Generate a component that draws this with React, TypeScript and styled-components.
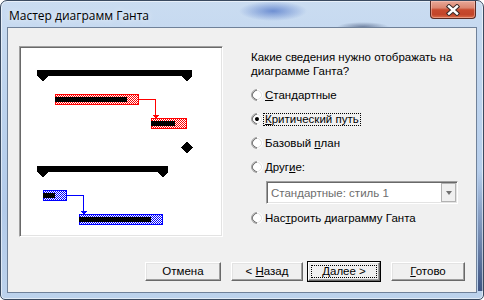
import React from 'react';
import styled, { createGlobalStyle, css } from 'styled-components';

const Global = createGlobalStyle`
  html, body { margin: 0; padding: 0; background: #ffffff; }
  body { width: 484px; height: 300px; overflow: hidden; }
`;

const UI_FONT = `'Liberation Sans', Arial, sans-serif`;

const Window = styled.div`
  width: 484px;
  height: 300px;
  box-sizing: border-box;
  display: flex;
  flex-direction: column;
  border: 1px solid #3a4a60;
  border-radius: 7px 7px 5px 5px;
  overflow: hidden;
  background:
    radial-gradient(ellipse 34px 10px at 272px 10px, rgba(80, 118, 200, 0.75), rgba(80, 118, 200, 0) 100%),
    radial-gradient(ellipse 26px 5px at 362px 26px, rgba(40, 58, 96, 0.55), rgba(40, 58, 96, 0) 100%),
    linear-gradient(180deg, rgba(40, 62, 112, 0) 0%, rgba(40, 62, 112, 0.85) 100%) 477px 170px / 6px 120px no-repeat,
    linear-gradient(180deg, #cadcf1 0%, #bed4ee 30%, #b3cbea 70%, #bcd2ec 100%);
  box-shadow: inset 0 0 0 1px rgba(255, 255, 255, 0.55);
  font-family: ${UI_FONT};
`;

const TitleBar = styled.div`
  height: 26px;
  flex: none;
  display: flex;
  align-items: flex-start;
  justify-content: space-between;
`;

const Title = styled.div`
  padding: 7px 0 0 8px;
  font-family: 'Open Sans', 'Noto Sans', sans-serif;
  font-size: 12px;
  line-height: 15px;
  color: #000;
  text-shadow: 0 0 6px rgba(255, 255, 255, 0.9);
`;

const CloseButton = styled.div`
  width: 46px;
  height: 18px;
  margin-right: 7px;
  box-sizing: border-box;
  border: 1px solid #5a2b24;
  border-top: none;
  border-radius: 0 0 4px 4px;
  background: linear-gradient(180deg, #e8a898 0%, #dc8670 40%, #c84a2e 52%, #c2452a 80%, #dc6e4a 100%);
  box-shadow: inset 0 0 0 1px rgba(255, 210, 200, 0.45);
  display: flex;
  align-items: center;
  justify-content: center;
`;

const Client = styled.div`
  flex: 1;
  margin: 0 6px 6px 6px;
  border: 1px solid #6f8199;
  background: #f0f0f0;
  display: flex;
  flex-direction: column;
  justify-content: space-between;
  font-size: 11.5px;
  color: #000;
`;

const MainRow = styled.div`
  display: flex;
  padding: 18px 0 0 11px;
`;

const Preview = styled.div`
  width: 204px;
  height: 191px;
  box-sizing: border-box;
  padding: 1px;
  border: 1px solid;
  border-color: #a0a0a0 #ffffff #ffffff #a0a0a0;
  box-shadow: inset 1px 1px #696969, inset -1px -1px #e3e3e3;
  background: #ffffff;
  svg { display: block; }
`;

const Options = styled.div`
  margin-left: 28px;
  padding-top: 4px;
  display: flex;
  flex-direction: column;
`;

const Question = styled.div`
  line-height: 14px;
  margin-bottom: 5px;
`;

const RadioRow = styled.div`
  height: 24px;
  display: flex;
  align-items: center;
`;

const RadioOuter = styled.span`
  width: 12px;
  height: 12px;
  box-sizing: border-box;
  border-radius: 50%;
  border: 1px solid;
  border-color: #a0a0a0 #ffffff #ffffff #a0a0a0;
  transform: rotate(-45deg);
  flex: none;
  margin-right: 2px;
  display: flex;
`;

const RadioInner = styled.span<{ $on?: boolean }>`
  flex: 1;
  border-radius: 50%;
  border: 1px solid;
  border-color: #696969 #e3e3e3 #e3e3e3 #696969;
  background: #ffffff;
  display: flex;
  align-items: center;
  justify-content: center;
  &::after {
    content: '';
    width: 4px;
    height: 4px;
    border-radius: 50%;
    background: ${(p) => (p.$on ? '#000' : 'transparent')};
  }
`;

const Label = styled.span<{ $focus?: boolean }>`
  padding: 0 1px;
  line-height: 11px;
  border: 1px dotted transparent;
  margin-left: -2px;
  ${(p) =>
    p.$focus &&
    css`
      border-color: #000;
    `}
`;

const Key = styled.span`
  text-decoration: underline;
  text-underline-offset: 1px;
`;

const Combo = styled.div`
  margin: 2px 0 2px 15px;
  width: 192px;
  height: 23px;
  box-sizing: border-box;
  border: 1px solid;
  border-color: #a0a0a0 #ffffff #ffffff #a0a0a0;
  box-shadow: inset 1px 1px #696969, inset -1px -1px #e3e3e3;
  background: #ffffff;
  display: flex;
  align-items: center;
  justify-content: space-between;
  padding: 0 1px 0 4px;
`;

const ComboText = styled.span`
  color: #6d6d6d;
`;

const ComboArrow = styled.span`
  width: 15px;
  height: 19px;
  box-sizing: border-box;
  border: 1px solid #b2b2b2;
  background: #f0f0f0;
  display: flex;
  align-items: center;
  justify-content: center;
  &::after {
    content: '';
    border-left: 3.5px solid transparent;
    border-right: 3.5px solid transparent;
    border-top: 4px solid #707070;
  }
`;

const ButtonRow = styled.div`
  display: flex;
  justify-content: flex-end;
  padding: 0 11px 11px 0;
`;

const Btn = styled.div<{ $w: number; $gap: number; $default?: boolean }>`
  width: ${(p) => p.$w}px;
  margin-left: ${(p) => p.$gap}px;
  height: 19px;
  box-sizing: border-box;
  padding: 2px;
  border: 1px solid;
  border-color: #ffffff #696969 #696969 #ffffff;
  box-shadow: inset -1px -1px #a0a0a0, inset 1px 1px #e3e3e3;
  background: #f0f0f0;
  display: flex;
  ${(p) =>
    p.$default &&
    css`
      outline: 1px solid #000;
    `}
`;

const BtnFace = styled.span<{ $focus?: boolean }>`
  flex: 1;
  display: flex;
  align-items: center;
  justify-content: center;
  border: 1px dotted ${(p) => (p.$focus ? '#000' : 'transparent')};
  line-height: 11px;
`;

const BtnText = styled.span`
  white-space: pre;
`;

const Chart = () => (
  <svg width={200} height={187} viewBox="21 48 200 187" shapeRendering="crispEdges">
    <defs>
      <pattern id="chkRed" width="2" height="2" patternUnits="userSpaceOnUse">
        <rect width="2" height="2" fill="#ffffff" />
        <rect width="1" height="1" fill="#ff0000" />
        <rect x="1" y="1" width="1" height="1" fill="#ff0000" />
      </pattern>
      <pattern id="chkBlue" width="2" height="2" patternUnits="userSpaceOnUse">
        <rect width="2" height="2" fill="#ffffff" />
        <rect width="1" height="1" fill="#0000ff" />
        <rect x="1" y="1" width="1" height="1" fill="#0000ff" />
      </pattern>
    </defs>
    <rect x={21} y={48} width={200} height={187} fill="#ffffff" />
    <polygon points="37,70 192,70 192,76 186.5,81.5 181,76 48,76 42.5,81.5 37,76" fill="#000" />
    <rect x={55.5} y={94.5} width={83} height={10} fill="url(#chkRed)" stroke="#ff0000" />
    <rect x={55} y={97} width={72} height={5} fill="#000" />
    <polyline points="139,99.5 155.5,99.5 155.5,115" fill="none" stroke="#ff0000" />
    <polygon points="152,115 159,115 155.5,118.5" fill="#ff0000" />
    <rect x={151.5} y={118.5} width={35} height={10} fill="url(#chkRed)" stroke="#ff0000" />
    <rect x={151} y={121} width={24} height={5} fill="#000" />
    <polygon points="186.5,141.5 192.5,147.5 186.5,153.5 180.5,147.5" fill="#000" />
    <polygon points="37,166 168,166 168,172 162.5,177.5 157,172 48,172 42.5,177.5 37,172" fill="#000" />
    <rect x={43.5} y={190.5} width={23} height={10} fill="url(#chkBlue)" stroke="#0000ff" />
    <rect x={43} y={193} width={12} height={5} fill="#000" />
    <polyline points="67,195.5 83.5,195.5 83.5,211" fill="none" stroke="#0000ff" />
    <polygon points="80,211 87,211 83.5,214.5" fill="#0000ff" />
    <rect x={79.5} y={214.5} width={83} height={10} fill="url(#chkBlue)" stroke="#0000ff" />
    <rect x={79} y={217} width={72} height={5} fill="#000" />
  </svg>
);

const CloseIcon = () => (
  <svg width={16} height={12} viewBox="0 0 16 12">
    <path d="M4 2.5 L12 9.5 M12 2.5 L4 9.5" stroke="#3b2a28" strokeWidth={4.4} strokeLinecap="square" fill="none" />
    <path d="M4 2.5 L12 9.5 M12 2.5 L4 9.5" stroke="#ffffff" strokeWidth={2.4} strokeLinecap="square" fill="none" />
  </svg>
);

type RadioProps = { on?: boolean; focus?: boolean; children: React.ReactNode };

const Radio = ({ on, focus, children }: RadioProps) => (
  <RadioRow>
    <RadioOuter>
      <RadioInner $on={on} />
    </RadioOuter>
    <Label $focus={focus}>{children}</Label>
  </RadioRow>
);

export default function App() {
  return (
    <>
      <Global />
      <Window>
        <TitleBar>
          <Title>Мастер диаграмм Ганта</Title>
          <CloseButton>
            <CloseIcon />
          </CloseButton>
        </TitleBar>
        <Client>
          <MainRow>
            <Preview>
              <Chart />
            </Preview>
            <Options>
              <Question>
                Какие сведения нужно отображать на
                <br />
                диаграмме Ганта?
              </Question>
              <Radio>
                <Key>С</Key>тандартные
              </Radio>
              <Radio on focus>
                <Key>К</Key>ритический путь
              </Radio>
              <Radio>
                Базовый <Key>п</Key>лан
              </Radio>
              <Radio>
                Друг<Key>и</Key>е:
              </Radio>
              <Combo>
                <ComboText>Стандартные: стиль 1</ComboText>
                <ComboArrow />
              </Combo>
              <Radio>
                Нас<Key>т</Key>роить диаграмму Ганта
              </Radio>
            </Options>
          </MainRow>
          <ButtonRow>
            <Btn $w={76} $gap={0}>
              <BtnFace>
                <BtnText>Отмена</BtnText>
              </BtnFace>
            </Btn>
            <Btn $w={72} $gap={10}>
              <BtnFace>
                <BtnText>
                  {'< '}
                  <Key>Н</Key>азад
                </BtnText>
              </BtnFace>
            </Btn>
            <Btn $w={72} $gap={5} $default>
              <BtnFace $focus>
                <BtnText>
                  <Key>Д</Key>
                  {'алее >'}
                </BtnText>
              </BtnFace>
            </Btn>
            <Btn $w={74} $gap={11}>
              <BtnFace>
                <BtnText>
                  <Key>Г</Key>отово
                </BtnText>
              </BtnFace>
            </Btn>
          </ButtonRow>
        </Client>
      </Window>
    </>
  );
}
